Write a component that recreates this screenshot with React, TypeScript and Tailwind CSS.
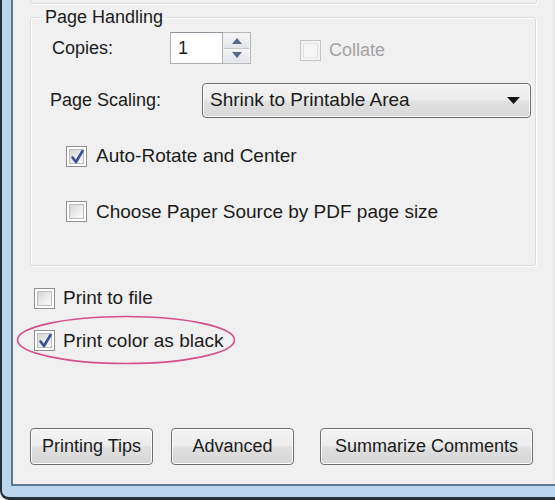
import React from "react";

const font = { fontFamily: '"Liberation Sans", Arial, sans-serif' };

function CheckBox({ checked = false, disabled = false }: { checked?: boolean; disabled?: boolean }) {
  return (
    <div
      className={[
        "relative flex h-[21px] w-[21px] shrink-0 items-center justify-center border",
        disabled ? "border-[#c4c4c4] bg-[#f4f4f4]" : "border-[#8e8f8f] bg-white",
      ].join(" ")}
    >
      <div
        className={[
          "h-[15px] w-[15px] border",
          disabled
            ? "border-[#e0e0e0] bg-[#f6f6f6]"
            : "border-[#bcbcbc] bg-[linear-gradient(135deg,#d4d4d4_0%,#ececec_55%,#fafafa_100%)]",
        ].join(" ")}
      />
      {checked && (
        <svg className="absolute left-[3px] top-[2px] h-[16px] w-[15px]" viewBox="0 0 15 16" aria-hidden="true">
          <path
            d="M2.5 8.5 L6 13 L12.5 2"
            fill="none"
            stroke="#3b4f96"
            strokeWidth="2.6"
            strokeLinecap="round"
            strokeLinejoin="round"
          />
        </svg>
      )}
    </div>
  );
}

function Button({ label, width }: { label: string; width: string }) {
  return (
    <div
      className={[
        "flex h-[37px] items-center justify-center rounded-[4px] border border-[#707070] text-[18px] text-[#1b1b1b] shadow-[inset_0_0_0_1px_#fcfcfc]",
        "bg-[linear-gradient(to_bottom,#f4f4f4_0%,#ececec_48%,#e0e0e0_52%,#d6d6d6_100%)]",
        width,
      ].join(" ")}
    >
      {label}
    </div>
  );
}

export default function App() {
  return (
    <div className="h-[500px] w-[555px] overflow-hidden bg-white" style={font}>
      {/* window frame: left + bottom */}
      <div className="h-[500px] w-[555px] rounded-bl-[9px] border-b-[3px] border-l-2 border-[#27313b] bg-[#bcd6ee] pb-[11px] pl-[9px]">
        <div className="relative h-full w-full border-b-2 border-l-2 border-[#5d7a95] bg-[#f0f0f0] text-[#1b1b1b]">
          {/* faint right edge of dialog */}
          <div className="absolute right-[1px] top-0 h-full w-px bg-[#e2e6ea]" />

          {/* bottom edge of previous group box */}
          <div className="ml-[17px] h-[4px] w-[507px] rounded-b-[3px] border-x border-b border-[#d5dfe5] shadow-[1px_1px_0_#ffffff]" />

          {/* Page Handling group */}
          <fieldset className="ml-[17px] mt-[3px] h-[259px] w-[506px] rounded-[3px] border border-[#d5dfe5] shadow-[inset_1px_1px_0_#ffffff,1px_1px_0_#ffffff]">
            <legend className="ml-[11px] px-[3px] text-[18px] leading-[20px]">Page Handling</legend>

            <div className="mt-[5px] flex h-[32px] items-center pl-[21px] text-[18px]">
              <div className="w-[118px]">Copies:</div>
              <div className="flex h-[32px] w-[53px] items-center border border-[#abadb3] border-t-[#8f939b] bg-white pl-[7px]">
                1
              </div>
              <div className="flex h-[32px] w-[28px] flex-col border border-l-0 border-[#b7b7b7] bg-[#f0f0f0] p-px">
                <div className="flex flex-1 items-center justify-center border-b border-[#c8c8c8] bg-[linear-gradient(to_bottom,#f6f6f6,#e2e4ea)]">
                  <svg width="10" height="6" viewBox="0 0 10 6" aria-hidden="true">
                    <path d="M0 6 L5 0 L10 6 Z" fill="#56698a" />
                  </svg>
                </div>
                <div className="flex flex-1 items-center justify-center bg-[linear-gradient(to_bottom,#f6f6f6,#e2e4ea)]">
                  <svg width="10" height="6" viewBox="0 0 10 6" aria-hidden="true">
                    <path d="M0 0 L10 0 L5 6 Z" fill="#56698a" />
                  </svg>
                </div>
              </div>
              <div className="ml-[49px] mt-[4px] flex items-center">
                <CheckBox disabled />
                <span className="ml-[8px] text-[#a3a3a3]">Collate</span>
              </div>
            </div>

            <div className="mt-[19px] flex h-[35px] items-center pl-[19px] text-[18px]">
              <div className="w-[152px]">Page Scaling:</div>
              <div className="flex h-[35px] w-[329px] items-center justify-between rounded-[4px] border border-[#707070] bg-[linear-gradient(to_bottom,#f4f4f4_0%,#ececec_48%,#e0e0e0_52%,#d8d8d8_100%)] pl-[7px] pr-[10px] text-[19px] shadow-[inset_0_0_0_1px_#fbfbfb]">
                <span>Shrink to Printable Area</span>
                <svg width="13" height="7" viewBox="0 0 13 7" aria-hidden="true">
                  <path d="M0 0 L13 0 L6.5 7 Z" fill="#111111" />
                </svg>
              </div>
            </div>

            <div className="mt-[24px] flex items-center pl-[35px] text-[19px]">
              <CheckBox checked />
              <span className="ml-[9px]">Auto-Rotate and Center</span>
            </div>

            <div className="mt-[27px] flex items-center pl-[35px] text-[19px]">
              <CheckBox />
              <span className="ml-[9px]">Choose Paper Source by PDF page size</span>
            </div>
          </fieldset>

          {/* print options */}
          <div className="ml-[21px] mt-[18px] flex items-center text-[19px]">
            <CheckBox />
            <span className="ml-[8px]">Print to file</span>
          </div>

          <div className="relative ml-[21px] mt-[14px] flex items-center text-[19px]">
            <CheckBox checked />
            <span className="ml-[8px]">Print color as black</span>
            <svg
              className="absolute left-[-18px] top-[-12px] h-[50px] w-[220px]"
              viewBox="0 0 220 50"
              aria-hidden="true"
            >
              <ellipse cx="110" cy="25" rx="108.5" ry="23.5" fill="none" stroke="#d2508c" strokeWidth="1.6" />
            </svg>
          </div>

          {/* bottom buttons */}
          <div className="ml-[17px] mt-[73px] flex items-center">
            <Button label="Printing Tips" width="w-[123px]" />
            <div className="ml-[18px]">
              <Button label="Advanced" width="w-[123px]" />
            </div>
            <div className="ml-[26px]">
              <Button label="Summarize Comments" width="w-[213px]" />
            </div>
          </div>
        </div>
      </div>
    </div>
  );
}
